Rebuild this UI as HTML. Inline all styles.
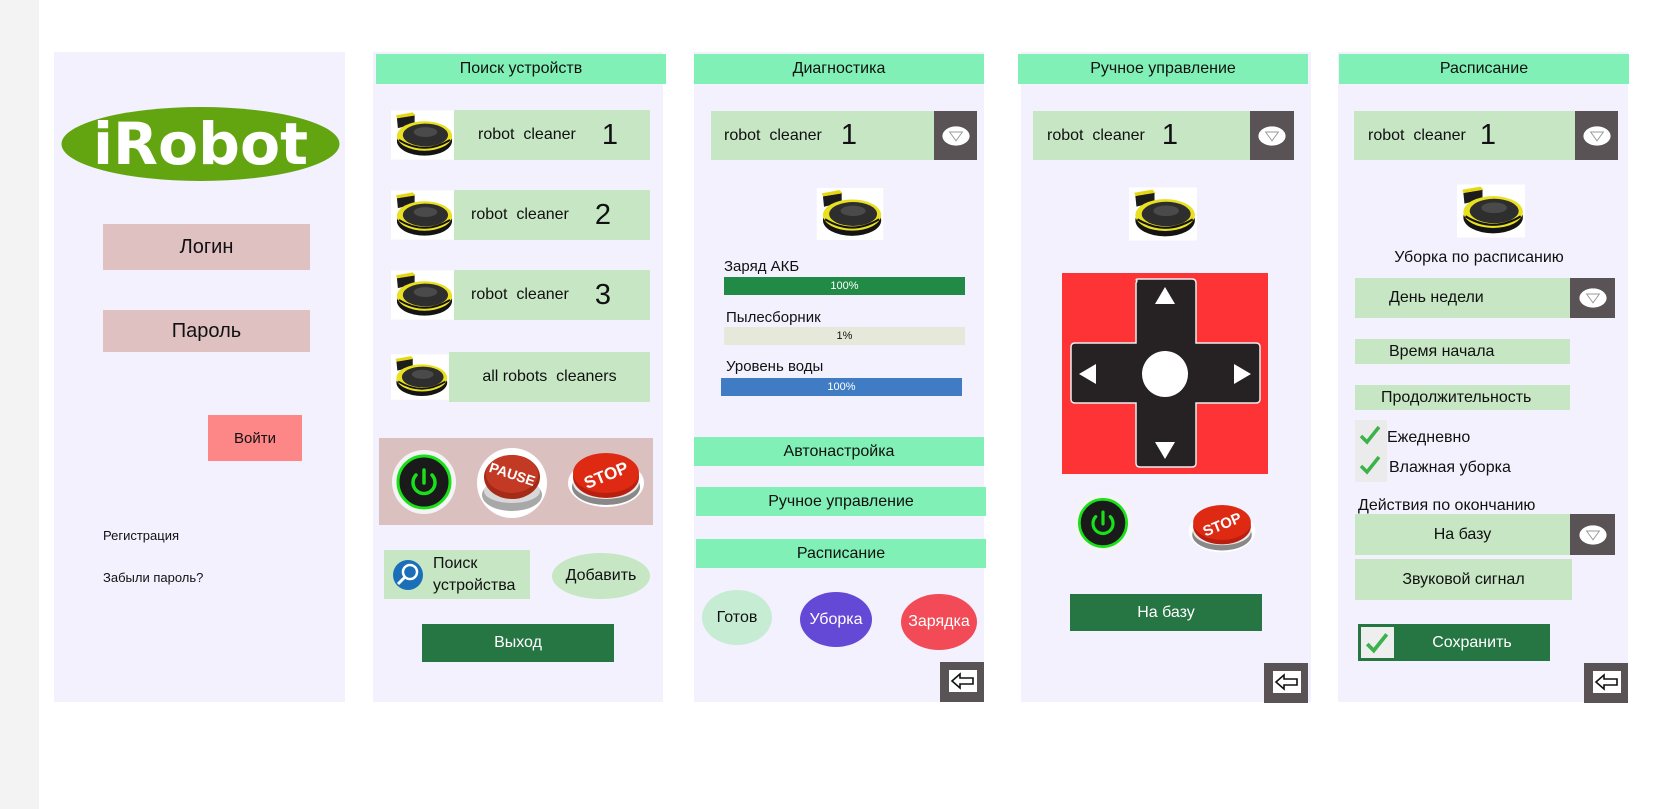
<!DOCTYPE html>
<html><head><meta charset="utf-8">
<style>
*{margin:0;padding:0;box-sizing:border-box}
body{width:1674px;height:809px;background:#fff;position:relative;overflow:hidden;font-family:"Liberation Sans","DejaVu Sans",sans-serif;color:#111}
.a{position:absolute}
.p{position:absolute;background:#f3f1fd}
.h{position:absolute;background:#80f0b6;text-align:center;font-size:16px;display:flex;align-items:center;justify-content:center}
.g{position:absolute;background:#c6e6c4;display:flex;align-items:center}
.dk{position:absolute;background:#595355;display:flex;align-items:center;justify-content:center}
.c{display:flex;align-items:center;justify-content:center;text-align:center}
.bk{position:absolute;background:#595355}
.bk svg{position:absolute;left:9px;top:8px}
</style></head><body>
<svg width="0" height="0" style="position:absolute">
<defs>
<symbol id="rb" viewBox="0 0 64 50">
<rect width="64" height="50" fill="#fff"/>
<path d="M6 8 L24 5 L24 14 L7 18 Z" fill="#1c1c1c"/>
<path d="M5 5 L22 2 L25 5 L6 8Z" fill="#e6d810"/>
<ellipse cx="34" cy="31" rx="28" ry="15" fill="#141414"/>
<ellipse cx="34" cy="26" rx="28" ry="15" fill="#e8e020"/>
<ellipse cx="35" cy="25" rx="23" ry="11.5" fill="#2e2e2e"/>
<ellipse cx="35" cy="22" rx="12" ry="5" fill="#4a4a4a"/>
<path d="M8 30 Q34 46 60 30" fill="none" stroke="#141414" stroke-width="2"/>
</symbol>
<symbol id="dd" viewBox="0 0 40 28">
<ellipse cx="20" cy="14" rx="17" ry="12" fill="#fff"/>
<path d="M12 9 L28 9 L20 20 Z" fill="none" stroke="#999" stroke-width="1.2"/>
</symbol>
<symbol id="ar" viewBox="0 0 28 22">
<rect width="28" height="22" fill="#fff"/>
<path d="M3 11 L11 4 L11 8 L24 8 L24 14 L11 14 L11 18 Z" fill="none" stroke="#111" stroke-width="1.6"/>
</symbol>
<symbol id="pw" viewBox="0 0 66 66">
<circle cx="33" cy="33" r="32" fill="#f4f4f4"/>
<circle cx="33" cy="33" r="26" fill="#1a1a1a" stroke="#19e019" stroke-width="3"/>
<path d="M25 26 A11 11 0 1 0 41 26" fill="none" stroke="#19e019" stroke-width="3.5" stroke-linecap="round"/>
<line x1="33" y1="21" x2="33" y2="34" stroke="#19e019" stroke-width="3.5" stroke-linecap="round"/>
</symbol>
<symbol id="st" viewBox="0 0 80 64">
<ellipse cx="40" cy="38" rx="38" ry="24" fill="#fff"/>
<ellipse cx="40" cy="42" rx="34" ry="18" fill="#888"/>
<ellipse cx="40" cy="38" rx="33" ry="16" fill="#e8e8e8"/>
<ellipse cx="40" cy="32" rx="33" ry="21" fill="#b81f10"/>
<ellipse cx="40" cy="28" rx="33" ry="20" fill="#de2a12"/>
<text x="40" y="36" font-family="Liberation Sans" font-weight="bold" font-size="17" fill="#fff" text-anchor="middle" transform="rotate(-22 40 30)">STOP</text>
</symbol>
</defs></svg>

<div class="a" style="left:0;top:0;width:39px;height:809px;background:#f3f3f3"></div>

<!-- Panel 1 -->
<div class="p" style="left:54px;top:52px;width:291px;height:650px"></div>
<svg class="a" style="left:61px;top:106px" width="279" height="76" viewBox="0 0 279 76">
<ellipse cx="139.5" cy="38" rx="139" ry="37" fill="#63a510"/>
<text x="32" y="58" font-family="DejaVu Sans" font-weight="bold" font-size="58" fill="#fff" textLength="215" lengthAdjust="spacingAndGlyphs">iRobot</text>
</svg>
<div class="a c" style="left:103px;top:224px;width:207px;height:46px;background:#dfc1c2;font-size:20px">Логин</div>
<div class="a c" style="left:103px;top:310px;width:207px;height:42px;background:#dfc1c2;font-size:20px">Пароль</div>
<div class="a c" style="left:208px;top:415px;width:94px;height:46px;background:#fd8686;font-size:15px">Войти</div>
<div class="a" style="left:103px;top:528px;font-size:13px">Регистрация</div>
<div class="a" style="left:103px;top:570px;font-size:13px">Забыли пароль?</div>

<!-- Panel 2 -->
<div class="p" style="left:373px;top:52px;width:290px;height:650px"></div>
<div class="h" style="left:376px;top:54px;width:290px;height:30px">Поиск устройств</div>
<svg class="a" style="left:391px;top:110px" width="63" height="50"><use href="#rb"/></svg>
<div class="g" style="left:454px;top:110px;width:196px;height:50px;font-size:16px"><span style="margin-left:24px">robot&nbsp; cleaner</span><span style="font-size:29px;margin-left:26px">1</span></div>
<svg class="a" style="left:391px;top:190px" width="63" height="50"><use href="#rb"/></svg>
<div class="g" style="left:454px;top:190px;width:196px;height:50px;font-size:16px"><span style="margin-left:17px">robot&nbsp; cleaner</span><span style="font-size:29px;margin-left:26px">2</span></div>
<svg class="a" style="left:391px;top:270px" width="63" height="50"><use href="#rb"/></svg>
<div class="g" style="left:454px;top:270px;width:196px;height:50px;font-size:16px"><span style="margin-left:17px">robot&nbsp; cleaner</span><span style="font-size:29px;margin-left:26px">3</span></div>
<svg class="a" style="left:391px;top:352px" width="58" height="50"><use href="#rb"/></svg>
<div class="g" style="left:449px;top:352px;width:201px;height:50px;font-size:16px;justify-content:center">all robots&nbsp; cleaners</div>
<div class="a" style="left:379px;top:438px;width:274px;height:87px;background:#dbc0c0"></div>
<svg class="a" style="left:391px;top:449px" width="66" height="66"><use href="#pw"/></svg>
<svg class="a" style="left:476px;top:447px" width="72" height="72" viewBox="0 0 72 72">
<circle cx="36" cy="36" r="35" fill="#fff"/>
<ellipse cx="36" cy="48" rx="30" ry="16" fill="#a8a8a8"/>
<ellipse cx="36" cy="44" rx="28" ry="12" fill="#d8d8d8"/>
<ellipse cx="36" cy="30" rx="28" ry="22" fill="#a52a18"/>
<ellipse cx="36" cy="27" rx="26" ry="19" fill="#c23a24"/>
<text x="36" y="32" font-family="Liberation Sans" font-weight="bold" font-size="14" fill="#fff" text-anchor="middle" transform="rotate(18 36 28)">PAUSE</text>
</svg>
<svg class="a" style="left:566px;top:445px" width="80" height="64"><use href="#st"/></svg>
<div class="g" style="left:384px;top:550px;width:146px;height:49px">
<svg style="margin-left:8px" width="32" height="32" viewBox="0 0 32 32"><circle cx="16" cy="16" r="15" fill="#1a6fb8"/><circle cx="18" cy="13" r="7" fill="none" stroke="#fff" stroke-width="2.5"/><line x1="13" y1="18" x2="6" y2="25" stroke="#fff" stroke-width="3"/></svg>
<span style="margin-left:9px;font-size:16px;line-height:22px">Поиск<br>устройства</span></div>
<div class="a c" style="left:552px;top:553px;width:98px;height:46px;border-radius:50%;background:#c6e6c4;font-size:16px">Добавить</div>
<div class="a c" style="left:422px;top:624px;width:192px;height:38px;background:#267644;color:#fff;font-size:16px">Выход</div>

<!-- Panel 3 -->
<div class="p" style="left:694px;top:52px;width:290px;height:650px"></div>
<div class="h" style="left:694px;top:54px;width:290px;height:30px">Диагностика</div>
<div class="g" style="left:711px;top:111px;width:223px;height:49px;font-size:16px"><span style="margin-left:13px">robot&nbsp; cleaner</span><span style="font-size:29px;margin-left:19px">1</span></div>
<div class="dk" style="left:934px;top:111px;width:43px;height:49px"><svg width="32" height="24"><use href="#dd"/></svg></div>
<svg class="a" style="left:816px;top:188px" width="68" height="52"><use href="#rb"/></svg>
<div class="a" style="left:724px;top:258px;font-size:15px">Заряд АКБ</div>
<div class="a c" style="left:724px;top:277px;width:241px;height:18px;background:#218a46;color:#fff;font-size:11px">100%</div>
<div class="a" style="left:726px;top:309px;font-size:15px">Пылесборник</div>
<div class="a c" style="left:724px;top:327px;width:241px;height:18px;background:#e6e8da;font-size:11px">1%</div>
<div class="a" style="left:726px;top:358px;font-size:15px">Уровень воды</div>
<div class="a c" style="left:721px;top:378px;width:241px;height:18px;background:#3f7cc4;color:#fff;font-size:11px">100%</div>
<div class="h" style="left:694px;top:437px;width:290px;height:29px">Автонастройка</div>
<div class="h" style="left:696px;top:487px;width:290px;height:29px">Ручное управление</div>
<div class="h" style="left:696px;top:539px;width:290px;height:29px">Расписание</div>
<div class="a c" style="left:702px;top:590px;width:70px;height:55px;border-radius:50%;background:#c6ecd3;font-size:16px">Готов</div>
<div class="a c" style="left:800px;top:592px;width:72px;height:55px;border-radius:50%;background:#6449d6;color:#fff;font-size:16px">Уборка</div>
<div class="a c" style="left:901px;top:594px;width:76px;height:56px;border-radius:50%;background:#f24a56;color:#fff;font-size:16px">Зарядка</div>
<div class="bk" style="left:940px;top:662px;width:44px;height:40px"><svg width="28" height="22"><use href="#ar"/></svg></div>

<!-- Panel 4 -->
<div class="p" style="left:1021px;top:52px;width:290px;height:650px"></div>
<div class="h" style="left:1018px;top:54px;width:290px;height:30px">Ручное управление</div>
<div class="g" style="left:1033px;top:111px;width:217px;height:49px;font-size:16px"><span style="margin-left:14px">robot&nbsp; cleaner</span><span style="font-size:29px;margin-left:17px">1</span></div>
<div class="dk" style="left:1250px;top:111px;width:44px;height:49px"><svg width="32" height="24"><use href="#dd"/></svg></div>
<svg class="a" style="left:1129px;top:187px" width="68" height="54"><use href="#rb"/></svg>
<svg class="a" style="left:1062px;top:273px" width="206" height="201" viewBox="0 0 206 201">
<rect width="206" height="201" fill="#fe3336"/>
<path d="M75 8 Q73 6 76 6 L130 6 Q134 6 134 10 L134 70 L194 70 Q198 70 198 74 L198 126 Q198 130 194 130 L134 130 L134 190 Q134 194 130 194 L78 194 Q74 194 74 190 L74 130 L13 130 Q9 130 9 126 L9 74 Q9 70 13 70 L74 70 L74 10 Z" fill="#262223" stroke="#eee" stroke-width="1.5"/>
<circle cx="103" cy="101" r="23" fill="#fff"/>
<path d="M103 14 L113 31 L93 31Z M103 186 L113 169 L93 169Z M17 101 L34 91 L34 111Z M189 101 L172 91 L172 111Z" fill="#fff"/>
</svg>
<svg class="a" style="left:1073px;top:493px" width="60" height="60"><use href="#pw"/></svg>
<svg class="a" style="left:1187px;top:495px" width="70" height="62"><use href="#st"/></svg>
<div class="a c" style="left:1070px;top:594px;width:192px;height:37px;background:#267644;color:#fff;font-size:16px">На базу</div>
<div class="bk" style="left:1264px;top:663px;width:44px;height:40px"><svg width="28" height="22"><use href="#ar"/></svg></div>

<!-- Panel 5 -->
<div class="p" style="left:1338px;top:52px;width:290px;height:650px"></div>
<div class="h" style="left:1339px;top:54px;width:290px;height:30px">Расписание</div>
<div class="g" style="left:1354px;top:111px;width:221px;height:49px;font-size:16px"><span style="margin-left:14px">robot&nbsp; cleaner</span><span style="font-size:29px;margin-left:14px">1</span></div>
<div class="dk" style="left:1575px;top:111px;width:43px;height:49px"><svg width="32" height="24"><use href="#dd"/></svg></div>
<svg class="a" style="left:1457px;top:184px" width="68" height="54"><use href="#rb"/></svg>
<div class="a" style="left:1338px;top:249px;width:290px;text-align:center;font-size:16px;padding-right:8px">Уборка по расписанию</div>
<div class="g" style="left:1355px;top:278px;width:215px;height:40px;font-size:16px"><span style="margin-left:34px">День недели</span></div>
<div class="dk" style="left:1570px;top:278px;width:45px;height:40px"><svg width="32" height="24"><use href="#dd"/></svg></div>
<div class="g" style="left:1355px;top:339px;width:215px;height:25px;font-size:16px"><span style="margin-left:34px">Время начала</span></div>
<div class="g" style="left:1355px;top:385px;width:215px;height:25px;font-size:16px"><span style="margin-left:26px">Продолжительность</span></div>
<div class="a" style="left:1355px;top:420px;width:32px;height:62px;background:#ebebeb"></div>
<svg class="a" style="left:1358px;top:424px" width="24" height="22" viewBox="0 0 24 22"><path d="M3 12 L9 18 L21 3" fill="none" stroke="#3bb24a" stroke-width="3.5"/></svg>
<svg class="a" style="left:1358px;top:454px" width="24" height="22" viewBox="0 0 24 22"><path d="M3 12 L9 18 L21 3" fill="none" stroke="#3bb24a" stroke-width="3.5"/></svg>
<div class="a" style="left:1387px;top:429px;font-size:16px">Ежедневно</div>
<div class="a" style="left:1389px;top:459px;font-size:16px">Влажная уборка</div>
<div class="a" style="left:1358px;top:497px;font-size:16px">Действия по окончанию</div>
<div class="g" style="left:1355px;top:514px;width:215px;height:41px;font-size:16px;justify-content:center">На базу</div>
<div class="dk" style="left:1570px;top:514px;width:45px;height:41px"><svg width="32" height="24"><use href="#dd"/></svg></div>
<div class="g" style="left:1355px;top:559px;width:217px;height:41px;font-size:16px;justify-content:center">Звуковой сигнал</div>
<div class="a" style="left:1358px;top:624px;width:192px;height:37px;background:#267644"></div>
<div class="a" style="left:1361px;top:627px;width:33px;height:31px;background:#eee"></div>
<svg class="a" style="left:1364px;top:631px" width="26" height="24" viewBox="0 0 24 22"><path d="M3 12 L9 18 L21 3" fill="none" stroke="#3bb24a" stroke-width="3.5"/></svg>
<div class="a c" style="left:1394px;top:624px;width:156px;height:37px;color:#fff;font-size:16px">Сохранить</div>
<div class="bk" style="left:1584px;top:663px;width:44px;height:40px"><svg width="28" height="22"><use href="#ar"/></svg></div>
</body></html>
